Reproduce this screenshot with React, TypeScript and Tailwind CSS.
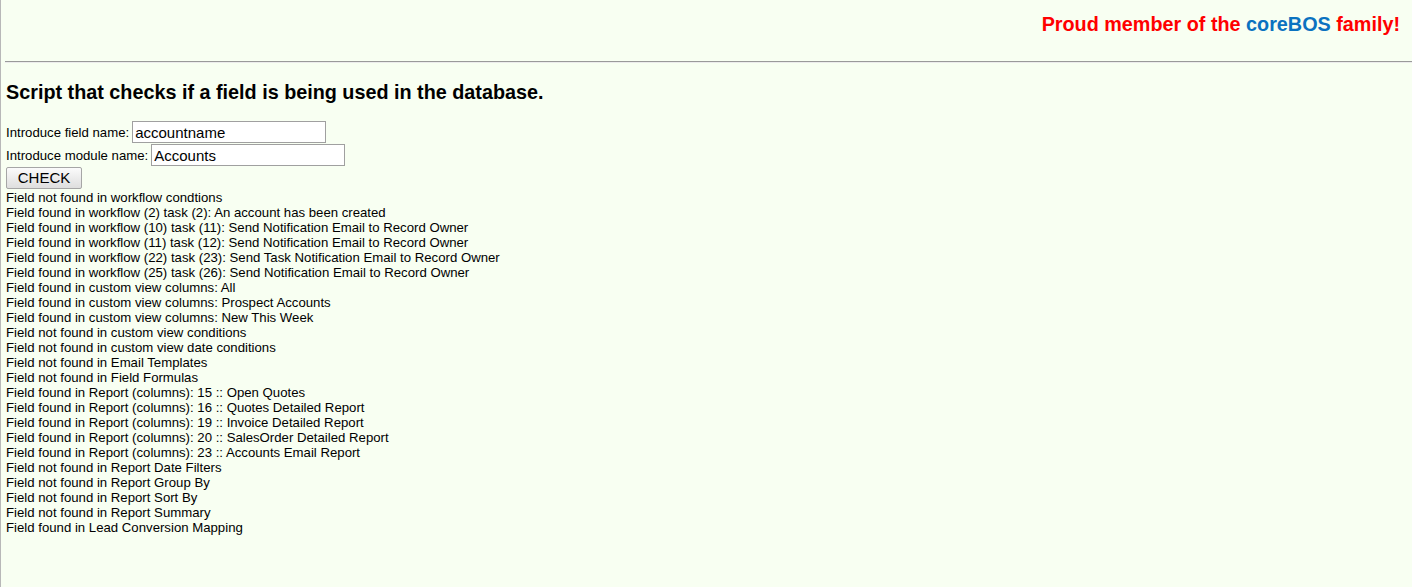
const results: string[] = [
  'Field not found in workflow condtions',
  'Field found in workflow (2) task (2): An account has been created',
  'Field found in workflow (10) task (11): Send Notification Email to Record Owner',
  'Field found in workflow (11) task (12): Send Notification Email to Record Owner',
  'Field found in workflow (22) task (23): Send Task Notification Email to Record Owner',
  'Field found in workflow (25) task (26): Send Notification Email to Record Owner',
  'Field found in custom view columns: All',
  'Field found in custom view columns: Prospect Accounts',
  'Field found in custom view columns: New This Week',
  'Field not found in custom view conditions',
  'Field not found in custom view date conditions',
  'Field not found in Email Templates',
  'Field not found in Field Formulas',
  'Field found in Report (columns): 15 :: Open Quotes',
  'Field found in Report (columns): 16 :: Quotes Detailed Report',
  'Field found in Report (columns): 19 :: Invoice Detailed Report',
  'Field found in Report (columns): 20 :: SalesOrder Detailed Report',
  'Field found in Report (columns): 23 :: Accounts Email Report',
  'Field not found in Report Date Filters',
  'Field not found in Report Group By',
  'Field not found in Report Sort By',
  'Field not found in Report Summary',
  'Field found in Lead Conversion Mapping',
];

export default function App() {
  return (
    <div className="min-h-[587px] bg-[#f8fff2] border-l border-[#b8b8b8] font-['Liberation_Sans',Arial,sans-serif] text-[13.2px] leading-[15px] text-black">
      <div className="flex justify-end h-[61px] pt-[12px] pr-[12px]">
        <span className="text-[19.8px] leading-[24px] font-bold text-[#ff0000]">
          Proud member of the <span className="text-[#0a72c0]">coreBOS</span>{' '}
          family!
        </span>
      </div>
      <div className="pl-[4px]">
        <hr className="border-0 border-t border-t-[#9a9a9a] border-b border-b-[#ececec]" />
        <div className="pl-[1px]">
          <h3 className="text-[19.8px] leading-[23px] font-bold mt-[18px] mb-[17px]">
            Script that checks if a field is being used in the database.
          </h3>
          <form className="flex flex-col gap-[1px]" onSubmit={(e) => e.preventDefault()}>
            <div className="flex items-center h-[22px]">
              <label htmlFor="fieldname">Introduce field name:</label>
              <input
                id="fieldname"
                defaultValue="accountname"
                className="ml-[3px] w-[194px] h-[22px] bg-white border border-[#a0a0a0] px-[2px] text-[15px] outline-none"
              />
            </div>
            <div className="flex items-center h-[22px]">
              <label htmlFor="modulename">Introduce module name:</label>
              <input
                id="modulename"
                defaultValue="Accounts"
                className="ml-[3px] w-[194px] h-[22px] bg-white border border-[#a0a0a0] px-[2px] text-[15px] outline-none"
              />
            </div>
            <div>
              <button
                type="submit"
                className="w-[76px] h-[22px] text-[15px] leading-[20px] border border-[#a6a6a6] rounded-[2px] bg-gradient-to-b from-[#fbfbfb] to-[#dedede]"
              >
                CHECK
              </button>
            </div>
          </form>
          <div className="mt-[1px]">
            {results.map((line) => (
              <div key={line}>{line}</div>
            ))}
          </div>
        </div>
      </div>
    </div>
  );
}
